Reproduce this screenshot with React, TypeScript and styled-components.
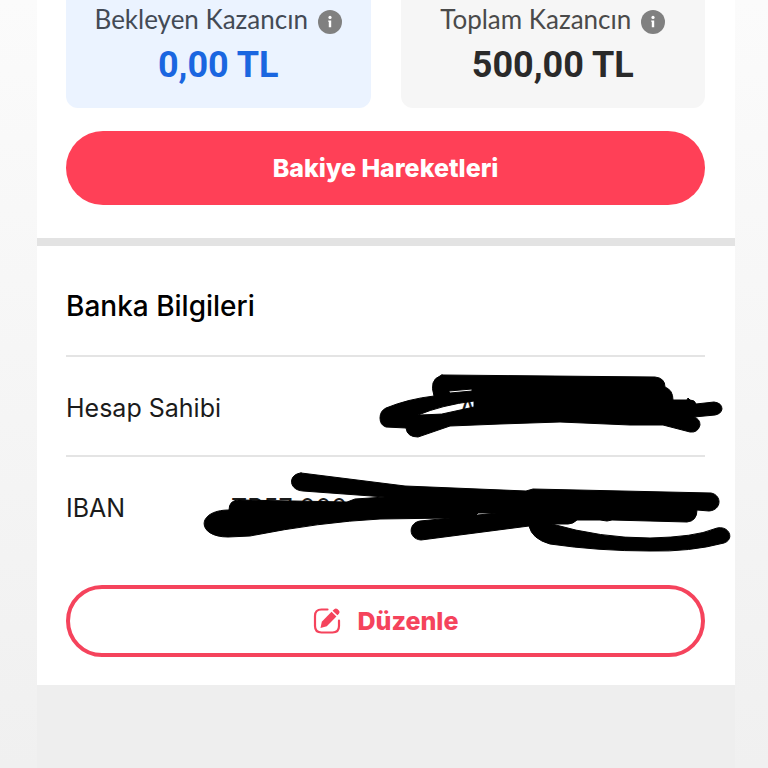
import React from "react";
import styled, { createGlobalStyle } from "styled-components";

const GlobalStyle = createGlobalStyle`
  * { box-sizing: border-box; }
  body {
    margin: 0;
    min-height: 100vh;
    background: linear-gradient(#fbfbfb, #f0f0f0) fixed;
    font-family: Inter, "Liberation Sans", sans-serif;
    color: #1b1b1b;
    overflow-x: hidden;
  }
`;

const Screen = styled.div`
  display: flex;
  flex-direction: column;
  min-height: 100vh;
  margin: 0 33px 0 37px;
  background: #eeeeee;
`;

const Section = styled.section`
  padding: 0 30px 0 29px;
  background: #ffffff;
`;

const Earnings = styled(Section)`
  padding-bottom: 33px;
  border-bottom: 8px solid #e3e3e3;
`;

const Cards = styled.div`
  display: grid;
  grid-template-columns: 1fr 1fr;
  gap: 30px;
`;

const Card = styled.div<{ $tone: "blue" | "gray" }>`
  display: flex;
  flex-direction: column;
  align-items: center;
  height: 108px;
  padding-top: 2px;
  border-radius: 0 0 12px 12px;
  background: ${(p) => (p.$tone === "blue" ? "#ebf3ff" : "#f6f6f6")};
  color: ${(p) => (p.$tone === "blue" ? "#1a66e0" : "#2a2a2a")};
`;

const CardLabel = styled.div<{ $tone: "blue" | "gray" }>`
  display: flex;
  align-items: center;
  gap: 10px;
  font-family: Lato, sans-serif;
  font-size: 26px;
  line-height: 34px;
  white-space: nowrap;
  color: ${(p) => (p.$tone === "blue" ? "#434a55" : "#4a4a4a")};
`;

const InfoButton = styled.button`
  display: flex;
  padding: 6px 0 0;
  border: 0;
  background: none;
`;

const Amount = styled.strong`
  font-family: Roboto, sans-serif;
  font-size: 36px;
  line-height: 58px;
  font-weight: 700;
`;

const PillButton = styled.button<{ $outline?: boolean }>`
  display: flex;
  align-items: center;
  justify-content: center;
  gap: 17px;
  width: 100%;
  height: ${(p) => (p.$outline ? 72 : 74)}px;
  margin-top: ${(p) => (p.$outline ? 30 : 23)}px;
  border: ${(p) => (p.$outline ? "4px solid #f5435c" : "0")};
  border-radius: 40px;
  background: ${(p) => (p.$outline ? "#ffffff" : "#ff4057")};
  color: ${(p) => (p.$outline ? "#f5435c" : "#ffffff")};
  font-family: inherit;
  font-size: 25px;
  font-weight: 800;
`;

const BankInfo = styled(Section)`
  padding-bottom: 28px;
`;

const Title = styled.h2`
  margin: 0;
  padding: 42px 0 31px;
  font-size: 28px;
  line-height: 36px;
  font-weight: 500;
  color: #000000;
`;

const Details = styled.dl`
  margin: 0;
`;

const Row = styled.div`
  position: relative;
  display: flex;
  align-items: center;
  height: 100px;
  padding-top: 3px;
  border-top: 2px solid #e4e4e4;
  font-size: 25px;
  line-height: 32px;
`;

const Term = styled.dt`
  flex: 0 0 165px;
`;

const Value = styled.dd`
  flex: 1;
  margin: 0;
  text-align: left;
`;

const OwnerValue = styled(Value)`
  padding-left: 228px;
`;

const Scribble = styled.svg`
  position: absolute;
  top: 0;
  right: -30px;
  stroke: #000000;
  stroke-linecap: round;
  stroke-linejoin: round;
`;

function InfoIcon() {
  return (
    <svg width="24" height="24" viewBox="0 0 24 24" aria-hidden="true">
      <circle cx="12" cy="12" r="12" fill="#808080" />
      <circle cx="12" cy="7.4" r="1.6" fill="#fff" />
      <path d="M10.2 10.4h3v6.8h-2.4v-5.4h-.6z" fill="#fff" />
    </svg>
  );
}

function EditIcon() {
  return (
    <svg width="28" height="28" viewBox="0 0 28 28" fill="none" aria-hidden="true">
      <path
        d="M14.5 2.5H8.5Q2 2.5 2 9v10q0 6.5 6.5 6.5h11q6.5 0 6.5-6.5v-5.5"
        stroke="#f5435c"
        strokeWidth="2.2"
        strokeLinecap="round"
      />
      <path d="M7.5 21l1.3-6.200L18.500 4.800l4.900 4.700L13.800 19.200z" fill="#f5435c" />
      <path d="M19.600 3.800l1.600-1.600q1.600-1.500 3.200-.2l1.500 1.500q1.500 1.600 0 3.200l-1.500 1.600z" fill="#f5435c" />
    </svg>
  );
}

const cards = [
  { label: "Bekleyen Kazancın", amount: "0,00 TL", tone: "blue" as const },
  { label: "Toplam Kazancın", amount: "500,00 TL", tone: "gray" as const },
];

export default function App() {
  return (
    <>
      <GlobalStyle />
      <Screen>
        <Earnings>
          <Cards>
            {cards.map((card) => (
              <Card key={card.label} $tone={card.tone}>
                <CardLabel $tone={card.tone}>
                  {card.label}
                  <InfoButton aria-label={`${card.label} hakkında bilgi`}>
                    <InfoIcon />
                  </InfoButton>
                </CardLabel>
                <Amount>{card.amount}</Amount>
              </Card>
            ))}
          </Cards>
          <PillButton>Bakiye Hareketleri</PillButton>
        </Earnings>
        <BankInfo>
          <Title>Banka Bilgileri</Title>
          <Details>
            <Row>
              <Term>Hesap Sahibi</Term>
              <OwnerValue>A</OwnerValue>
              <Scribble width="364" height="98" viewBox="371 357 364 98" aria-hidden="true">
                <path
                  strokeWidth="1"
                  d="M442 375L655 377Q665 378 665 387Q673 390 673 400L687 400L688 398L690 400Q695 400 696 404L714 402Q722 403 722 409Q721 414 715 415L694 417Q700 419 700 425Q698 433 690 432L663 425L630 425L560 422L500 424L450 426L418 437Q407 437 406 428L386 427Q380 425 380 418Q380 411 386 408Q408 399 434 396Q429 380 440 376Q441 375 442 375Z M449 391L472 389L472 391L450 393Z M418 415Q442 405 474 401L474 407L442 414Z"
                  fillRule="evenodd"
                />
              </Scribble>
            </Row>
            <Row>
              <Term>IBAN</Term>
              <Value>TR57 000</Value>
              <Scribble width="540" height="98" viewBox="195 457 540 98" aria-hidden="true">
                <path
                  strokeWidth="1"
                  d="M301 473L405 486L526 491L533 489L711 493C722 495 722 510 709 511L697 510Q697 521 687 522L612 520L607 521L600 520L577 520Q573 524 568 524L552 524Q600 538 650 538Q695 537 714 529C728 523 736 539 724 543Q690 552 650 551Q598 551 550 544Q532 539 529 526L421 540C408 539 408 523 420 521L450 518L380 519Q320 522 250 536L228 537C196 537 196 510 229 510Q229 500 239 500L347 502L355 499L385 497L303 491C288 490 288 474 301 473Z M476 515L478 513L493 513L496 513Z"
                  fillRule="evenodd"
                />
              </Scribble>
            </Row>
          </Details>
          <PillButton $outline>
            <EditIcon />
            Düzenle
          </PillButton>
        </BankInfo>
      </Screen>
    </>
  );
}
